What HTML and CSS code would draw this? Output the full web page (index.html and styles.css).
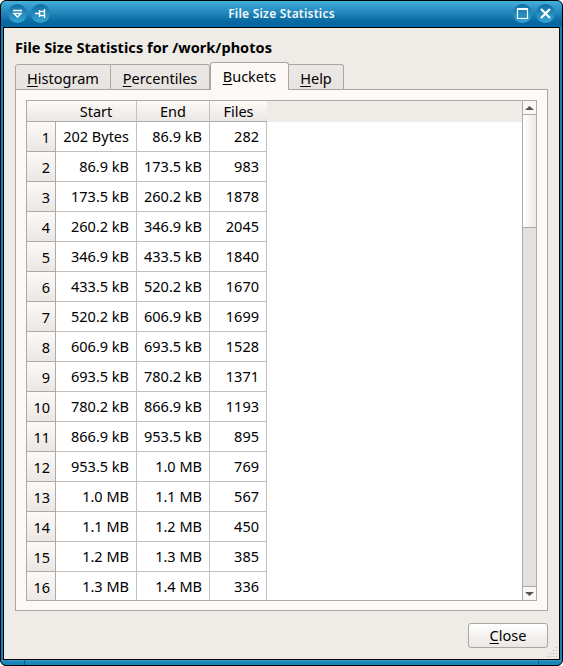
FILE: index.html
```
<!DOCTYPE html>
<html lang="en">
<head>
<meta charset="utf-8">
<title>File Size Statistics</title>
<link rel="stylesheet" href="styles.css">
</head>
<body>
<div class="window">
  <header class="titlebar">
    <span class="round"><svg width="19" height="19" viewBox="0 0 19 19"><path d="M5 6.500h9M6 9.500h7L9.500 13z" /></svg></span>
    <span class="round"><svg width="19" height="19" viewBox="0 0 19 19"><path d="M4 9.500h5M8.500 6v7M9 7.500h4M9 11.500h4M13.500 5v9" /></svg></span>
    <h1>File Size Statistics</h1>
    <span class="round"><svg width="19" height="19" viewBox="0 0 19 19"><path d="M4.500 4.500h10v10h-10zM4 5.500h11" class="thin" /></svg></span>
    <span class="round"><svg width="19" height="19" viewBox="0 0 19 19"><path d="M5 5l9 9M14 5l-9 9" class="thick" /></svg></span>
  </header>
  <main class="client">
    <h2>File Size Statistics for /work/photos</h2>
    <nav class="tabs">
      <div class="tab histogram"><span><u>H</u>istogram</span></div>
      <div class="tab percentiles"><span><u>P</u>ercentiles</span></div>
      <div class="tab buckets active"><span><u>B</u>uckets</span></div>
      <div class="tab help"><span><u>H</u>elp</span></div>
    </nav>
    <section class="panel">
      <div class="view">
        <div class="cells">
          <div class="head"><div class="corner"></div><div class="start">Start</div><div class="end">End</div><div class="files">Files</div></div>
          <div id="rows"></div>
        </div>
        <div class="scrollbar">
          <div class="arrow"><svg width="9" height="4" viewBox="0 0 9 4"><path d="M0 4h9L4.500 0z"/></svg></div>
          <div class="thumb"></div><div class="track"></div>
          <div class="arrow down"><svg width="9" height="4" viewBox="0 0 9 4"><path d="M0 0h9L4.500 4z"/></svg></div>
        </div>
      </div>
    </section>
    <footer><button><span><u>C</u>lose</span></button></footer>
    <svg class="grip" width="10" height="10" viewBox="0 0 10 10"><path d="M9 0h1v1h-1zM6 3h1v1h-1zM9 3h1v1h-1zM3 6h1v1h-1zM6 6h1v1h-1zM9 6h1v1h-1zM0 9h1v1h-1zM3 9h1v1h-1zM6 9h1v1h-1zM9 9h1v1h-1z"/></svg>
  </main>
  <div class="bottom"></div>
</div>
<script src="script.js"></script>
</body>
</html>
```
FILE: styles.css
```
* { box-sizing: border-box; }
body { margin: 0; background: #fff; font: 14.5px/20px "Noto Sans", sans-serif; color: #000; }
.window { width: 563px; height: 666px; background: #000; border: 1px solid #000; border-radius: 6px; overflow: hidden; display: flex; flex-direction: column; }
.titlebar { height: 26px; display: flex; align-items: flex-start; gap: 4px; padding: 3px 7px 0; background: linear-gradient(#43aedb, #0868a2 80%, #0769a3); }
.titlebar h1 { flex: 1; margin: 0; text-align: center; color: #f3f7fa; font-size: 12px; font-weight: 600; line-height: 20px; letter-spacing: 0.22px; }
.round { width: 19px; height: 19px; border-radius: 50%; background: linear-gradient(#106ea5, #38a5d2); }
.round svg { display: block; fill: none; stroke: #fff; stroke-width: 1.4; }
.round .thin { stroke-width: 1.2; }
.round .thick { stroke-width: 2.2; }
.client { position: relative; flex: 1; margin: 0 2px; border: 1px solid #000; background: #efebe7; padding: 9px 11px 0; box-shadow: -2px 0 #1b82b7, 2px 0 #1b82b7; }
h2 { margin: 0; height: 27px; font-size: 14.5px; line-height: 20px; letter-spacing: 0.05px; }
.tabs { display: flex; align-items: flex-end; height: 26px; position: relative; z-index: 1; }
.tab { height: 26px; padding: 3px 0 0; text-align: center; border: 1px solid #aaa6a2; border-left-width: 0; background: linear-gradient(#ece8e5, #e7e3e0); border-radius: 0 3px 0 0; }
.tab.histogram { width: 96px; border-left-width: 1px; border-radius: 3px 0 0 0; }
.tab.percentiles { width: 99px; }
.tab.buckets { width: 79px; }
.tab.help { width: 55px; }
.tab.active { height: 28px; background: #fcf9f6; border-left-width: 1px; border-bottom: 0; border-radius: 3px 3px 0 0; }
.tab u, button u { text-decoration-thickness: 1px; text-underline-offset: 2px; }
.panel { width: 533px; height: 522px; margin-top: -1px; border: 1px solid #aaa6a2; background: #fcf9f6; padding: 10px; }
.view { width: 511px; height: 501px; border: 1px solid #aeaaa6; background: #fff; display: flex; }
.cells { flex: 1; overflow: hidden; background: linear-gradient(#efebe7 21px, #fff 21px); }
.head, .row { display: grid; grid-template-columns: 29px 81px 73px 57px; width: 240px; }
.head { height: 21px; }
.head div { text-align: center; background: linear-gradient(#fcf9f6, #ebe7e4); border-right: 1px solid #c5c1bd; border-bottom: 1px solid #aeaaa6; }
.head .corner { border-right: 0; }
.head .files { border-right: 0; }
.row { height: 30px; }
.row div { border: 0 solid #c0c0c0; border-width: 0 1px 1px 0; padding: 4px 7px 0 0; line-height: 20px; text-align: right; white-space: nowrap; }
.row .number { padding: 5px 5px 0 0; border-color: #aeaaa6; background: linear-gradient(#fcf9f6, #ebe7e4); }
.scrollbar { width: 14px; border-left: 1px solid #aeaaa6; display: flex; flex-direction: column; }
.arrow { height: 14px; display: flex; align-items: center; justify-content: center; background: #f8f7f6; border-bottom: 1px solid #aeaaa6; }
.arrow path { fill: #555; }
.arrow.down { border-top: 1px solid #aeaaa6; border-bottom: 0; }
.thumb { height: 113px; border-bottom: 1px solid #aeaaa6; background: linear-gradient(90deg, #fff, #eceae8); }
.track { flex: 1; background: #e3e1df; }
footer { display: flex; justify-content: flex-end; padding: 12px 0 0; width: 533px; }
button { width: 80px; height: 25px; border: 1px solid #aaa6a2; border-radius: 3px; padding: 0 0 2px; font: inherit; line-height: 20px; color: #000; background: linear-gradient(#fff, #ebe8e5); }
.grip { position: absolute; right: 2px; bottom: 2px; fill: #b4b0ac; }
.bottom { height: 5px; background: linear-gradient(90deg, transparent 23px, #075f93 23px, #075f93 24px, transparent 24px, transparent 537px, #075f93 537px, #075f93 538px, transparent 538px), linear-gradient(#38a0ce, #1984b9 40%, #1984b9); }
```
FILE: script.js
```
const limits = ["202 Bytes", "86.9 kB", "173.5 kB", "260.2 kB", "346.9 kB", "433.5 kB", "520.2 kB", "606.9 kB", "693.5 kB", "780.2 kB", "866.9 kB", "953.5 kB", "1.0 MB", "1.1 MB", "1.2 MB", "1.3 MB", "1.4 MB"];
const files = [282, 983, 1878, 2045, 1840, 1670, 1699, 1528, 1371, 1193, 895, 769, 567, 450, 385, 336];
document.getElementById("rows").innerHTML = files.map((n, i) =>
  `<div class="row"><div class="number">${i + 1}</div><div>${limits[i]}</div><div>${limits[i + 1]}</div><div>${n}</div></div>`).join("");
```
